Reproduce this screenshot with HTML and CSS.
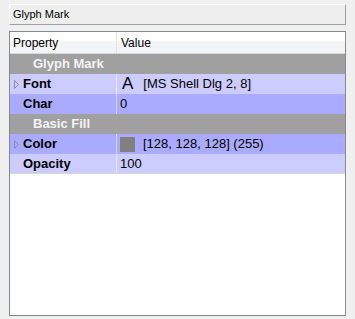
FILE: index.html
```html
<!DOCTYPE html>
<html lang="en">
<head>
  <meta charset="UTF-8" />
  <title>Glyph Mark</title>
  <link rel="stylesheet" href="styles.css">
</head>
<body>
  <div class="panel">
    <div class="title">Glyph Mark</div>

    <div class="grid">
      <div class="row head">
        <div class="cell name">Property</div>
        <div class="cell value">Value</div>
      </div>

      <div class="row group">Glyph Mark</div>

      <div class="row light">
        <div class="cell name">
          <svg class="expand" width="5" height="9" viewBox="0 0 5 9"><path d="M0.5 0.5 L4.5 4.5 L0.5 8.5 Z" fill="none" stroke="#8a8a9c" stroke-width="1"/></svg>
          <span>Font</span>
        </div>
        <div class="cell value"><span class="glyph">A</span>[MS Shell Dlg 2, 8]</div>
      </div>
      <div class="row dark">
        <div class="cell name"><span>Char</span></div>
        <div class="cell value">0</div>
      </div>

      <div class="row group">Basic Fill</div>

      <div class="row dark">
        <div class="cell name">
          <svg class="expand" width="5" height="9" viewBox="0 0 5 9"><path d="M0.5 0.5 L4.5 4.5 L0.5 8.5 Z" fill="none" stroke="#8a8a9c" stroke-width="1"/></svg>
          <span>Color</span>
        </div>
        <div class="cell value"><span class="swatch"></span>[128, 128, 128] (255)</div>
      </div>
      <div class="row light last">
        <div class="cell name"><span>Opacity</span></div>
        <div class="cell value">100</div>
      </div>
    </div>
  </div>
</body>
</html>
```

FILE: styles.css
```css
* {
  box-sizing: border-box;
}

body {
  margin: 0;
  background: #f0f0f0;
  font-family: 'Liberation Sans', Arial, sans-serif;
  color: #000;
}

.panel {
  padding: 4px 9px 0 9px;
  width: 355px;
  height: 319px;
}

.title {
  height: 21px;
  background: #eeeeee;
  border-top: 1px solid #fff;
  border-left: 1px solid #fff;
  border-right: 1px solid #a0a0a0;
  border-bottom: 1px solid #a0a0a0;
  font-size: 11px;
  line-height: 19px;
  padding-left: 3px;
}

.grid {
  margin-top: 6px;
  height: 285px;
  background: #fff;
  border: 1px solid #828790;
  border-right-color: #8a8a8a;
}

.row {
  display: flex;
  height: 20px;
  font-size: 13px;
  line-height: 20px;
}

.cell {
  display: flex;
  align-items: center;
}

.cell.name {
  width: 107px;
  border-right: 1px solid rgba(255, 255, 255, 0.45);
  font-weight: bold;
  padding-left: 4px;
}

.cell.name span {
  margin-left: 9px;
}

.cell.name .expand + span {
  margin-left: 4px;
}

.cell.value {
  flex: 1;
  padding-left: 3px;
}

.head {
  height: 22px;
  font-size: 12px;
  background: linear-gradient(#fff 0, #fff 9px, #f3f4f6 9px);
  border-bottom: 1px solid #d5d5d5;
}

.head .cell.name {
  font-weight: normal;
  padding-left: 3px;
  border-right: 1px solid #e3e3e3;
}

.head .cell.value {
  padding-left: 4px;
}

.group {
  background: #a0a0a0;
  color: #f4f4f4;
  font-weight: bold;
  padding-left: 23px;
}

.light {
  background: #ccccff;
}

.dark {
  background: #aaaaff;
}

.last {
  border-bottom: 1px solid #d8d8d8;
  height: 20px;
}

.glyph {
  font-size: 17px;
  margin: 0 10px 0 2px;
  line-height: 20px;
}

.swatch {
  display: inline-block;
  width: 15px;
  height: 15px;
  background: #808080;
  margin-right: 8px;
}
```
